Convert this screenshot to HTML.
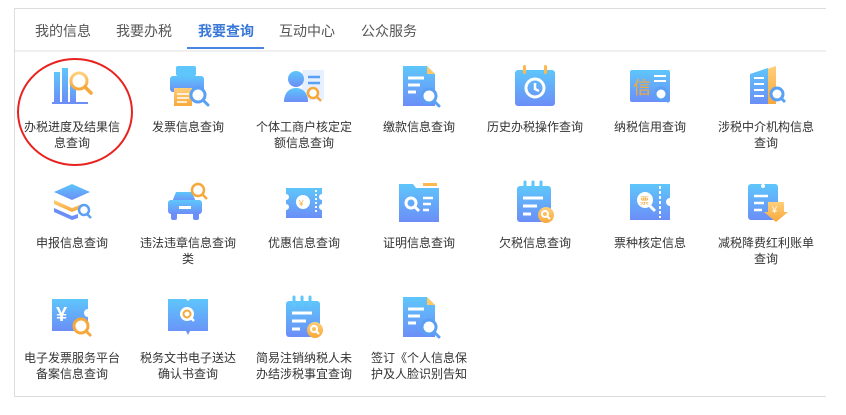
<!DOCTYPE html>
<html><head><meta charset="utf-8"><style>
body{margin:0;background:#fff;width:846px;height:415px;overflow:hidden;font-family:"Liberation Sans","Noto Sans CJK SC",sans-serif;position:relative}
.panel{position:absolute;left:14px;top:8px;width:812px;height:389px;border:1px solid #dcdcdc;border-right:none;box-sizing:border-box}
.tabs{position:absolute;left:0;top:0;width:100%;height:41px;border-bottom:2px solid #f0f0f0}
.tab{position:absolute;top:12px;font-size:14px;color:#555;transform:translateX(-50%);white-space:nowrap}
.tab.on{color:#3a78d8;font-weight:bold}
.ul{position:absolute;left:172px;top:38px;width:77px;height:2px;background:#4a86e0}
.cell{position:absolute;width:116px;text-align:center}
.cell svg{display:block;margin:0 auto;width:44px;height:44px}
.cell div{margin-top:11px;font-size:12px;line-height:16px;color:#333;padding:0 8px}
.circ{position:absolute;left:17px;top:58px;width:116px;height:108px;border:2px solid #e8231f;border-radius:50%;box-sizing:border-box}
</style></head><body>
<svg width="0" height="0" style="position:absolute"><defs>
<linearGradient id="g" x1="0" y1="0" x2="0" y2="1"><stop offset="0" stop-color="#5ec6fb"/><stop offset="1" stop-color="#6b8ef7"/></linearGradient>
<linearGradient id="o" x1="0" y1="0" x2="0" y2="1"><stop offset="0" stop-color="#ffcf7a"/><stop offset="1" stop-color="#f7a83a"/></linearGradient>
</defs></svg>
<div class="panel">
<div class="tabs">
<span class="tab" style="left:48px">我的信息</span>
<span class="tab" style="left:129px">我要办税</span>
<span class="tab on" style="left:211px">我要查询</span>
<span class="tab" style="left:292px">互动中心</span>
<span class="tab" style="left:374px">公众服务</span>
<div class="ul"></div>
</div>
</div>
<div class="circ"></div>

<!-- row 1 -->
<div class="cell" style="left:14px;top:64px"><svg viewBox="0 0 44 44"><rect x="4" y="8" width="6" height="30" fill="url(#g)"/><rect x="12" y="4" width="6" height="34" fill="url(#g)"/><rect x="20" y="14" width="6" height="24" fill="url(#g)"/><rect x="2" y="38" width="36" height="2" fill="#6b8ef7"/><circle cx="29" cy="17" r="8" fill="#fff" stroke="url(#o)" stroke-width="3"/><path d="M35 23l6 6" stroke="#f7a83a" stroke-width="3.5" stroke-linecap="round"/></svg><div>办税进度及结果信息查询</div></div>
<div class="cell" style="left:130px;top:64px"><svg viewBox="0 0 44 44"><rect x="10" y="2" width="20" height="10" rx="2" fill="#5ec6fb"/><rect x="4" y="12" width="34" height="16" rx="3" fill="url(#g)"/><rect x="8" y="24" width="18" height="18" fill="url(#o)"/><path d="M11 30h12M11 34h12M11 38h10" stroke="#fff" stroke-width="1.5"/><circle cx="32" cy="31" r="7" fill="#fff" stroke="#5aa0f5" stroke-width="3"/><path d="M37 36l5 5" stroke="#5aa0f5" stroke-width="3" stroke-linecap="round"/></svg><div>发票信息查询</div></div>
<div class="cell" style="left:246px;top:64px"><svg viewBox="0 0 44 44"><rect x="20" y="6" width="22" height="30" rx="2" fill="#e6f0ff"/><path d="M26 13h12M26 19h12" stroke="#5aa0f5" stroke-width="2.5"/><circle cx="14" cy="15" r="8" fill="url(#g)"/><path d="M2 38c0-10 6-14 12-14s12 4 12 14z" fill="url(#g)"/><circle cx="31" cy="29" r="5" fill="#fff" stroke="#f7a83a" stroke-width="2.5"/><path d="M35 33l4 4" stroke="#f7a83a" stroke-width="2.5"/></svg><div>个体工商户核定定额信息查询</div></div>
<div class="cell" style="left:361px;top:64px"><svg viewBox="0 0 44 44"><path d="M6 2h24l8 8v32H6z" fill="url(#g)"/><path d="M30 2l8 8h-8z" fill="#ffc865"/><path d="M11 14h16M11 21h12M11 28h8" stroke="#fff" stroke-width="3"/><circle cx="32" cy="32" r="7" fill="#fff" stroke="#5aa0f5" stroke-width="3"/><path d="M37 37l5 5" stroke="#5aa0f5" stroke-width="3" stroke-linecap="round"/></svg><div>缴款信息查询</div></div>
<div class="cell" style="left:477px;top:64px"><svg viewBox="0 0 44 44"><rect x="2" y="6" width="40" height="36" rx="3" fill="url(#g)"/><rect x="10" y="1" width="3" height="9" rx="1.5" fill="#ffb84d"/><rect x="31" y="1" width="3" height="9" rx="1.5" fill="#ffb84d"/><circle cx="22" cy="24" r="9" fill="none" stroke="#fff" stroke-width="3"/><path d="M22 19v6l4 2" stroke="#fff" stroke-width="2.5" fill="none"/></svg><div>历史办税操作查询</div></div>
<div class="cell" style="left:592px;top:64px"><svg viewBox="0 0 44 44"><rect x="2" y="6" width="40" height="32" rx="2" fill="url(#g)"/><text x="5" y="30" font-size="18" fill="#f7a83a" font-family="Noto Sans CJK SC">信</text><path d="M26 12h12M26 17h12" stroke="#fff" stroke-width="2"/><circle cx="33" cy="30" r="6" fill="#fff" stroke="#5aa0f5" stroke-width="3"/><path d="M37 34l4 4" stroke="#5aa0f5" stroke-width="3"/></svg><div>纳税信用查询</div></div>
<div class="cell" style="left:708px;top:64px"><svg viewBox="0 0 44 44"><path d="M20 6l12-4v38H20z" fill="url(#o)"/><path d="M6 10l18-6v36H6z" fill="url(#g)"/><path d="M10 14h10M10 20h10M10 26h10M10 32h10" stroke="#fff" stroke-width="2"/><circle cx="33" cy="30" r="6" fill="#fff" stroke="#5aa0f5" stroke-width="3"/><path d="M37 34l4 4" stroke="#5aa0f5" stroke-width="3"/></svg><div>涉税中介机构信息查询</div></div>

<!-- row 2 -->
<div class="cell" style="left:14px;top:180px"><svg viewBox="0 0 44 44"><path d="M4 12l18-8 18 8-18 8z" fill="url(#g)"/><path d="M4 20l18 8 10-4v4l-10 4-18-8z" fill="url(#o)"/><path d="M4 28l18 8 6-2v4l-6 2-18-8z" fill="#6b8ef7"/><circle cx="34" cy="30" r="5" fill="#fff" stroke="#5aa0f5" stroke-width="2.5"/><path d="M37 34l4 4" stroke="#5aa0f5" stroke-width="2.5"/></svg><div>申报信息查询</div></div>
<div class="cell" style="left:130px;top:180px"><svg viewBox="0 0 44 44"><path d="M6 22l4-10h16l4 10z" fill="url(#g)"/><rect x="2" y="20" width="34" height="14" rx="3" fill="url(#g)"/><rect x="5" y="32" width="6" height="8" rx="2" fill="#6b8ef7"/><rect x="27" y="32" width="6" height="8" rx="2" fill="#6b8ef7"/><rect x="13" y="26" width="12" height="3" fill="#fff"/><circle cx="32" cy="10" r="6" fill="#fff" stroke="#f7a83a" stroke-width="2.5"/><path d="M36 14l5 5" stroke="#f7a83a" stroke-width="2.5"/></svg><div>违法违章信息查询类</div></div>
<div class="cell" style="left:246px;top:180px"><svg viewBox="0 0 44 44"><path d="M4 8h36v6a3 3 0 0 0 0 6v4a3 3 0 0 0 0 6v8H4v-8a3 3 0 0 0 0-6v-4a3 3 0 0 0 0-6z" fill="url(#g)"/><circle cx="21" cy="22" r="7" fill="#fff"/><text x="17" y="26" font-size="8" fill="#f7a83a">¥</text><path d="M34 10v24" stroke="#fff" stroke-dasharray="2 2" stroke-width="2"/></svg><div>优惠信息查询</div></div>
<div class="cell" style="left:361px;top:180px"><svg viewBox="0 0 44 44"><path d="M2 4h14l3 4h23v34H2z" fill="url(#g)"/><rect x="26" y="3" width="14" height="3" fill="#ffb84d"/><circle cx="14" cy="23" r="5" fill="none" stroke="#fff" stroke-width="3"/><path d="M18 27l4 4" stroke="#fff" stroke-width="3"/><path d="M26 18h10M26 24h8M26 30h6" stroke="#fff" stroke-width="2.5"/></svg><div>证明信息查询</div></div>
<div class="cell" style="left:477px;top:180px"><svg viewBox="0 0 44 44"><rect x="4" y="6" width="34" height="36" rx="3" fill="url(#g)"/><path d="M12 2v8M20 2v8M28 2v8" stroke="#5ec6fb" stroke-width="3" stroke-linecap="round"/><path d="M10 18h20M10 26h14M10 34h8" stroke="#fff" stroke-width="3"/><circle cx="33" cy="35" r="8" fill="url(#o)"/><circle cx="32" cy="34" r="3" fill="none" stroke="#fff" stroke-width="2"/><path d="M34 36l3 3" stroke="#fff" stroke-width="2"/></svg><div>欠税信息查询</div></div>
<div class="cell" style="left:592px;top:180px"><svg viewBox="0 0 44 44"><path d="M2 4h40v14a4 4 0 0 0 0 8v14H2z" fill="url(#g)"/><path d="M32 6v32" stroke="#fff" stroke-dasharray="3 2" stroke-width="2"/><circle cx="17" cy="20" r="8" fill="#fff"/><text x="12" y="24" font-size="9" fill="#f7a83a" font-family="Noto Sans CJK SC">票</text><path d="M22 26l5 5" stroke="#fff" stroke-width="3"/></svg><div>票种核定信息</div></div>
<div class="cell" style="left:708px;top:180px"><svg viewBox="0 0 44 44"><rect x="4" y="4" width="30" height="36" rx="3" fill="url(#g)"/><circle cx="19" cy="6" r="2" fill="#fff"/><path d="M10 16h14M10 23h10M10 30h8" stroke="#fff" stroke-width="2.5"/><path d="M24 22h16v10h4l-12 10-12-10h4z" fill="url(#o)"/><text x="28" y="33" font-size="9" fill="#fff">¥</text></svg><div>减税降费红利账单查询</div></div>

<!-- row 3 -->
<div class="cell" style="left:14px;top:295px"><svg viewBox="0 0 44 44"><path d="M2 4h36v10a4 4 0 0 0 0 8v14H2z" fill="url(#g)"/><text x="6" y="26" font-size="20" fill="#fff" font-weight="bold">¥</text><circle cx="31" cy="31" r="7" fill="#fff" stroke="#f7a83a" stroke-width="3"/><path d="M36 36l5 5" stroke="#f7a83a" stroke-width="3"/></svg><div>电子发票服务平台备案信息查询</div></div>
<div class="cell" style="left:130px;top:295px"><svg viewBox="0 0 44 44"><path d="M2 4h18l2 2 2-2h18v32H24l-2 4-2-4H2z" fill="url(#g)"/><circle cx="21" cy="19" r="7" fill="#fff"/><circle cx="21" cy="19" r="3.5" fill="none" stroke="#f7a83a" stroke-width="2"/><path d="M24 22l4 4" stroke="#fff" stroke-width="2.5"/></svg><div>税务文书电子送达确认书查询</div></div>
<div class="cell" style="left:246px;top:295px"><svg viewBox="0 0 44 44"><rect x="4" y="6" width="34" height="36" rx="3" fill="url(#g)"/><path d="M12 2v8M20 2v8M28 2v8" stroke="#5ec6fb" stroke-width="3" stroke-linecap="round"/><path d="M10 18h20M10 26h14M10 34h8" stroke="#fff" stroke-width="3"/><circle cx="33" cy="35" r="8" fill="url(#o)"/><circle cx="32" cy="34" r="3" fill="none" stroke="#fff" stroke-width="2"/><path d="M34 36l3 3" stroke="#fff" stroke-width="2"/></svg><div>简易注销纳税人未办结涉税事宜查询</div></div>
<div class="cell" style="left:361px;top:295px"><svg viewBox="0 0 44 44"><path d="M6 2h24l8 8v32H6z" fill="url(#g)"/><path d="M30 2l8 8h-8z" fill="#ffc865"/><path d="M11 14h16M11 21h12M11 28h8" stroke="#fff" stroke-width="3"/><circle cx="32" cy="32" r="7" fill="#fff" stroke="#5aa0f5" stroke-width="3"/><path d="M37 37l5 5" stroke="#5aa0f5" stroke-width="3" stroke-linecap="round"/></svg><div>签订《个人信息保护及人脸识别告知</div></div>
</body></html>
